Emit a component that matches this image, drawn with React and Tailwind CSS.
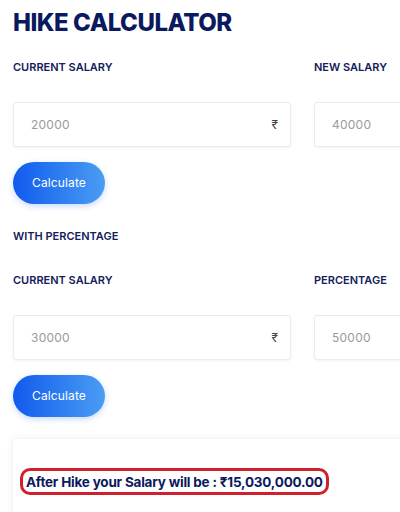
import React from 'react';

const Field = ({ label, value, suffix }) => (
  <div className="flex flex-col">
    <label className="text-[11px] font-semibold text-[#13205a] leading-none h-[12px]">{label}</label>
    <div className="mt-[28px] h-[45px] flex items-center justify-between px-[17px] bg-white border border-[#ececec] rounded-[3px] shadow-[0_1px_3px_rgba(0,0,0,0.05)]">
      <span className="text-[12px] text-[#9a9a9a] tracking-[0.02em]">{value}</span>
      {suffix && <span className="text-[12px] text-[#444] mr-[-5px]">{suffix}</span>}
    </div>
  </div>
);

const CalcButton = () => (
  <button className="mt-[15px] w-[92px] h-[42px] rounded-full bg-gradient-to-r from-[#1259ee] to-[#4b9cf2] text-white text-[12px] tracking-[0.01em] shadow-[0_2px_6px_rgba(30,100,240,0.25)]">
    Calculate
  </button>
);

export default function App() {
  return (
    <div className="w-[400px] h-[512px] overflow-hidden bg-white" style={{ fontFamily: 'Inter, "Noto Sans", sans-serif' }}>
      <div className="w-[640px] pl-[13px]">
        <h1 className="pt-[10px] text-[24px] font-extrabold leading-[26px] text-[#0b1a5e] tracking-[-0.02em]">HIKE CALCULATOR</h1>

        <div className="mt-[26px] grid grid-cols-[278px_278px] gap-x-[23px]">
          <Field label="CURRENT SALARY" value="20000" suffix="₹" />
          <Field label="NEW SALARY" value="40000" />
        </div>
        <CalcButton />

        <div className="mt-[27px] text-[11px] font-semibold text-[#13205a] leading-none">WITH PERCENTAGE</div>

        <div className="mt-[33px] grid grid-cols-[278px_278px] gap-x-[23px]">
          <Field label="CURRENT SALARY" value="30000" suffix="₹" />
          <Field label="PERCENTAGE" value="50000" />
        </div>
        <CalcButton />

        <div className="mt-[22px] bg-white h-[120px] shadow-[0_0_8px_rgba(0,0,0,0.08)] pl-[7px] pt-[29px]">
          <div className="inline-block border-[3px] border-[#d0202e] rounded-[10px] px-[3px] py-0 leading-[20px]">
            <span className="text-[13.5px] font-bold text-[#0b1a5e] tracking-[-0.015em]">After Hike your Salary will be : ₹15,030,000.00</span>
          </div>
        </div>
      </div>
    </div>
  );
}
